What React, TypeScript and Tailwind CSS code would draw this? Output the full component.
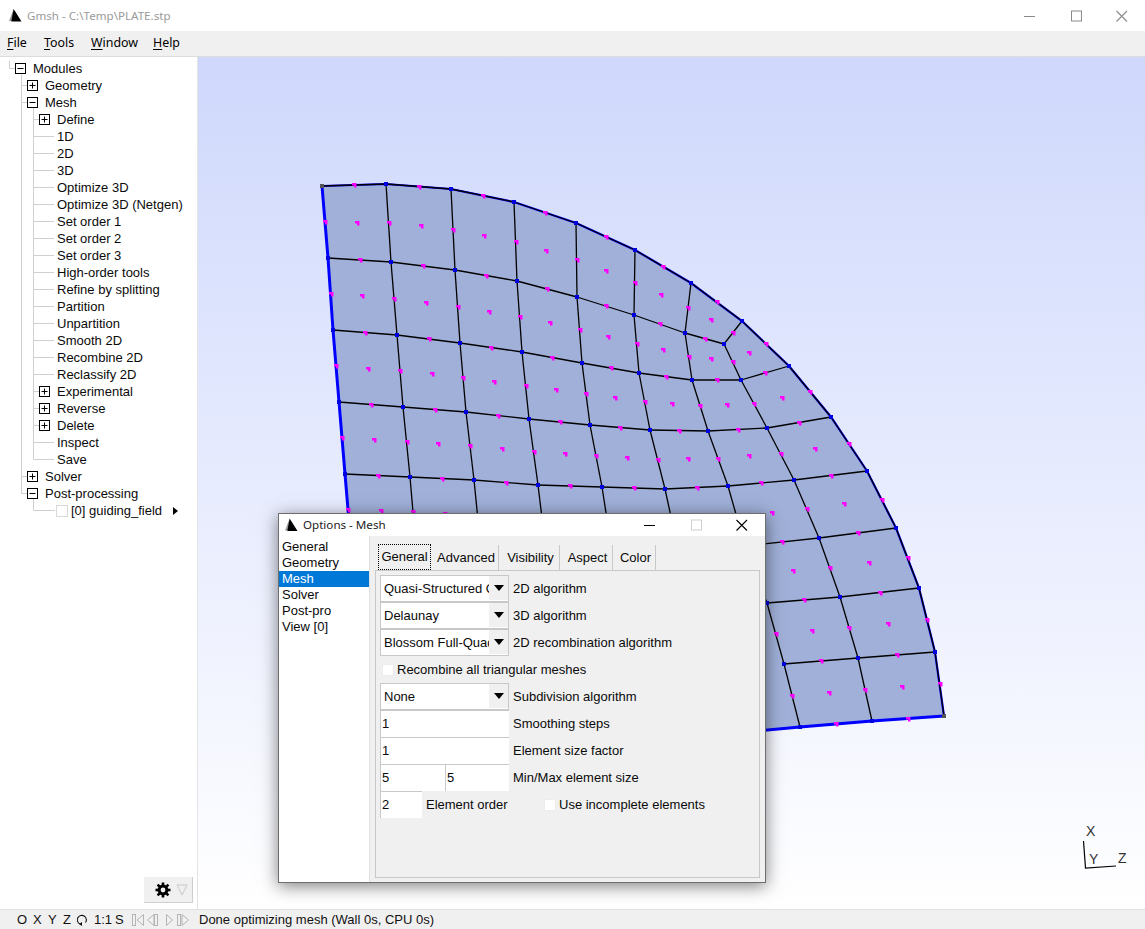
import type { ReactNode } from "react";

type Pt = [number, number];

// mesh nodes, in page coordinates
const grid: Pt[][] = [
  [[322, 186], [386, 184], [451, 189], [514, 202], [576, 223], [635, 250], [691, 283]],
  [[328, 258], [391, 262], [455, 270], [517, 281], [577, 297], [634, 315], [685, 333]],
  [[333, 330], [397, 335], [460, 343], [522, 352], [582, 363], [639, 373], [692, 380]],
  [[339, 402], [403, 407], [466, 412], [529, 419], [590, 425], [650, 430], [708, 431]],
  [[345, 474], [410, 477], [474, 480], [538, 485], [602, 487], [665, 489], [728, 486]],
  [[351, 545], [416, 547], [481, 550], [546, 551], [612, 551], [678, 549], [745, 546]],
];

const extraQuads: Pt[][] = [
  [[691, 283], [742, 321], [724, 344], [685, 333]],
  [[742, 321], [789, 366], [741, 380], [724, 344]],
  [[685, 333], [724, 344], [741, 380], [692, 380]],
  [[692, 380], [741, 380], [767, 428], [708, 431]],
  [[741, 380], [789, 366], [831, 417], [767, 428]],
  [[708, 431], [767, 428], [794, 480], [728, 486]],
  [[767, 428], [831, 417], [867, 471], [794, 480]],
  [[728, 486], [794, 480], [819, 538], [745, 546]],
  [[794, 480], [867, 471], [896, 528], [819, 538]],
  [[745, 546], [819, 538], [840, 597], [767, 603]],
  [[819, 538], [896, 528], [919, 588], [840, 597]],
  [[767, 603], [840, 597], [858, 658], [784, 664]],
  [[840, 597], [919, 588], [935, 652], [858, 658]],
  [[784, 664], [858, 658], [872, 721], [800, 727]],
  [[858, 658], [935, 652], [944, 716], [872, 721]],
];

const quads: Pt[][] = [...extraQuads];
for (let r = 0; r < grid.length - 1; r++) {
  for (let c = 0; c < grid[r].length - 1; c++) {
    quads.push([grid[r][c], grid[r][c + 1], grid[r + 1][c + 1], grid[r + 1][c]]);
  }
}

const edges = new Map<string, [Pt, Pt]>();
const nodes = new Map<string, Pt>();
quads.forEach((q) => {
  q.forEach((p, i) => {
    const n = q[(i + 1) % 4];
    nodes.set(p.join(), p);
    const key = [p.join(), n.join()].sort().join("|");
    edges.set(key, [p, n]);
  });
});

const centers: Pt[] = quads.map((q) => [
  q.reduce((s, p) => s + p[0], 0) / 4,
  q.reduce((s, p) => s + p[1], 0) / 4,
]);
const mids: Pt[] = [...edges.values()].map(([a, b]) => [(a[0] + b[0]) / 2, (a[1] + b[1]) / 2]);

const leftEdge: Pt[] = [[351, 545], [345, 474], [339, 402], [333, 330], [328, 258], [322, 186]];
const arc: Pt[] = [
  [322, 186], [386, 184], [451, 189], [514, 202], [576, 223], [635, 250], [691, 283],
  [742, 321], [789, 366], [831, 417], [867, 471], [896, 528], [919, 588],
  [935, 652], [944, 716],
];
const bottomEdge: Pt[] = [[944, 716], [872, 721], [800, 727], [700, 736]];
const toPoints = (pts: Pt[]) => pts.map((p) => p.join(",")).join(" ");

const MeshView = () => (
  <svg viewBox="198 57 947 852" className="block h-full w-full">
    <polygon points={toPoints([...leftEdge, ...arc, ...bottomEdge, [400, 736]])} fill="#a0b0d8" />
    <polyline points={toPoints(arc)} fill="none" stroke="#0000ff" strokeWidth={2.2} />
    {[...edges.values()].map(([a, b], i) => (
      <line key={i} x1={a[0]} y1={a[1]} x2={b[0]} y2={b[1]} stroke="#000" strokeWidth={1.3} />
    ))}
    <polyline points={toPoints(leftEdge)} fill="none" stroke="#0000ff" strokeWidth={3} />
    <polyline points={toPoints(bottomEdge)} fill="none" stroke="#0000ff" strokeWidth={3} />
    {[...nodes.values()].map((p, i) => (
      <rect key={i} x={Math.round(p[0]) - 2} y={Math.round(p[1]) - 2} width={4} height={4} fill="#0000e0" />
    ))}
    {[...mids, ...centers].map((p, i) => (
      <path key={i} d={`M${Math.round(p[0]) - 2} ${Math.round(p[1]) - 2}h4.5v4.5h-2.5v-2h-2z`} fill="#ff00ff" />
    ))}
    <rect x={320} y={184} width={4} height={4} fill="#555" />
    <rect x={942} y={714} width={4} height={4} fill="#555" />
    {/* axes */}
    <polyline points="1083.5,841 1085.5,868 1116,866" fill="none" stroke="#000" strokeWidth={1.2} />
    <g fontFamily="'Liberation Sans', Arial, sans-serif" fontSize={14} fill="#333">
      <text x={1086} y={836}>X</text>
      <text x={1089} y={864}>Y</text>
      <text x={1118} y={863}>Z</text>
    </g>
  </svg>
);

const Sail = ({ className }: { className: string }) => (
  <svg viewBox="0 0 14 14" className={className}>
    <polygon points="5,0 5,13 0,13" fill="#9a9a9a" />
    <polygon points="5,0 13.5,13.5 2.5,13.5" fill="#000" />
  </svg>
);

const WinButtons = ({ color, maxColor, closeColor }: { color: string; maxColor: string; closeColor: string }) => (
  <div className="flex items-center">
    <svg width="46" height="12" viewBox="0 0 46 12">
      <line x1="17" y1="6.5" x2="28" y2="6.5" stroke={color} />
    </svg>
    <svg width="46" height="12" viewBox="0 0 46 12">
      <rect x="18.5" y="1" width="10" height="10" fill="none" stroke={maxColor} />
    </svg>
    <svg width="46" height="12" viewBox="0 0 46 12">
      <path d="M17.5 1 L28 11.5 M28 1 L17.5 11.5" stroke={closeColor} strokeWidth="1.1" />
    </svg>
  </div>
);

type TreeItem = { label: string; depth: number; box?: "+" | "-" };

const tree: TreeItem[] = [
  { label: "Modules", depth: 0, box: "-" },
  { label: "Geometry", depth: 1, box: "+" },
  { label: "Mesh", depth: 1, box: "-" },
  { label: "Define", depth: 2, box: "+" },
  { label: "1D", depth: 2 },
  { label: "2D", depth: 2 },
  { label: "3D", depth: 2 },
  { label: "Optimize 3D", depth: 2 },
  { label: "Optimize 3D (Netgen)", depth: 2 },
  { label: "Set order 1", depth: 2 },
  { label: "Set order 2", depth: 2 },
  { label: "Set order 3", depth: 2 },
  { label: "High-order tools", depth: 2 },
  { label: "Refine by splitting", depth: 2 },
  { label: "Partition", depth: 2 },
  { label: "Unpartition", depth: 2 },
  { label: "Smooth 2D", depth: 2 },
  { label: "Recombine 2D", depth: 2 },
  { label: "Reclassify 2D", depth: 2 },
  { label: "Experimental", depth: 2, box: "+" },
  { label: "Reverse", depth: 2, box: "+" },
  { label: "Delete", depth: 2, box: "+" },
  { label: "Inspect", depth: 2 },
  { label: "Save", depth: 2 },
  { label: "Solver", depth: 1, box: "+" },
  { label: "Post-processing", depth: 1, box: "-" },
];

const TreeBox = ({ kind }: { kind: "+" | "-" }) => (
  <svg width="11" height="11" viewBox="0 0 11 11" className="shrink-0">
    <rect x="0.5" y="0.5" width="10" height="10" fill="#fff" stroke="#000" />
    <line x1="2.5" y1="5.5" x2="8.5" y2="5.5" stroke="#000" />
    {kind === "+" && <line x1="5.5" y1="2.5" x2="5.5" y2="8.5" stroke="#000" />}
  </svg>
);

const TreeRow = ({ item }: { item: TreeItem }) => {
  const left = 15 + item.depth * 12;
  return (
    <div className="relative flex h-[17px] items-center whitespace-nowrap" style={{ paddingLeft: left }}>
      {item.box ? <TreeBox kind={item.box} /> : <span className="w-[11px]" />}
      <span className="ml-[7px]">{item.label}</span>
    </div>
  );
};

// connector lines of the tree, behind the rows
const TreeLines = () => {
  const rowY = (i: number) => 8.5 + i * 17;
  const segs: number[][] = [[9.5, 0, 9.5, 8.5], [9.5, 8.5, 15, 8.5]];
  const last1 = rowY(25);
  segs.push([21.5, 14, 21.5, last1]);
  const last2 = rowY(23);
  segs.push([33.5, rowY(2) + 5, 33.5, last2]);
  segs.push([33.5, rowY(25) + 5, 33.5, rowY(26)], [33.5, rowY(26), 55, rowY(26)]);
  tree.forEach((t, i) => {
    if (t.depth === 1) segs.push([21.5, rowY(i), 27, rowY(i)]);
    if (t.depth === 2) segs.push([33.5, rowY(i), t.box ? 39 : 54, rowY(i)]);
  });
  return (
    <svg className="absolute top-0 left-0" width="70" height="460">
      {segs.map((s, i) => (
        <line key={i} x1={s[0]} y1={Math.floor(s[1]) + 0.5} x2={s[2]} y2={Math.floor(s[3]) + 0.5} stroke="#cfcfcf" />
      ))}
    </svg>
  );
};

const Choice = ({ value }: { value: string }) => (
  <div className="flex h-[27px] w-[129px] border border-[#c8c8c8] bg-white pb-[1px]">
    <span className="w-[108px] overflow-hidden pl-[3px] leading-[25px] whitespace-nowrap">{value}</span>
    <span className="flex w-[19px] items-center justify-center bg-[#f0f0f0]">
      <svg width="10" height="6" viewBox="0 0 10 6">
        <polygon points="0,0 10,0 5,6" fill="#000" />
      </svg>
    </span>
  </div>
);

const Input = ({ value, width }: { value: string; width: string }) => (
  <div className={`h-[27px] border-t border-l border-[#c8c8c8] bg-white pl-[1px] leading-[25px] ${width}`}>{value}</div>
);

const Row = ({ children, label }: { children: ReactNode; label?: string }) => (
  <div className="flex h-[27px] items-center">
    {children}
    {label && <span className="ml-[4px]">{label}</span>}
  </div>
);

const Check = ({ label, className }: { label: string; className?: string }) => (
  <div className={`flex items-center ${className ?? ""}`}>
    <span className="mr-[3px] h-[12px] w-[12px] border border-[#ececec] bg-white" />
    <span>{label}</span>
  </div>
);

const OptionsDialog = () => (
  <div className="absolute top-[513px] left-[278px] flex h-[370px] w-[488px] flex-col border border-[#6e6e6e] bg-white text-[13px] text-[#0a0a0a] shadow-[0_3px_16px_rgba(0,0,0,0.5)]">
    <div className="flex h-[22px] shrink-0 items-center justify-between">
      <div className="flex items-center pl-[6px]">
        <Sail className="h-[14px] w-[13px]" />
        <span className="ml-[5px] font-['Noto_Sans',sans-serif] text-[11.6px] text-[#222]">Options - Mesh</span>
      </div>
      <WinButtons color="#000" maxColor="#cfcfcf" closeColor="#000" />
    </div>
    <div className="flex min-h-0 flex-1">
      <div className="w-[90px] shrink-0 pt-[3px] font-['Liberation_Sans',Arial,sans-serif]">
        {["General", "Geometry", "Mesh", "Solver", "Post-pro", "View [0]"].map((name) => (
          <div key={name} className={`h-[16px] pl-[3px] leading-[16px] ${name === "Mesh" ? "bg-[#0078d7] text-white" : ""}`}>
            {name}
          </div>
        ))}
      </div>
      <div className="flex min-w-0 flex-1 flex-col border-l border-[#e0e0e0] bg-[#f0f0f0] pr-[5px] pb-[4px] pl-[5px] font-['Liberation_Sans',Arial,sans-serif]">
        <div className="flex h-[34px] shrink-0 items-end pl-[3px]">
          <div className="mr-[3px] flex h-[26px] w-[53px] items-center justify-center border border-dotted border-black pb-[1px]">General</div>
          {[
            ["Advanced", "w-[65px]"],
            ["Visibility", "w-[58px]"],
            ["Aspect", "w-[50px]"],
            ["Color", "w-[40px]"],
          ].map(([name, w]) => (
            <div key={name} className={`mr-[3px] flex h-[25px] items-center justify-center border-r border-[#c8c8c8] pt-[1px] ${w}`}>
              {name}
            </div>
          ))}
        </div>
        <div className="flex-1 border border-[#c8c8c8] px-[4px] pt-[4px]">
          <Row label="2D algorithm"><Choice value="Quasi-Structured Quad" /></Row>
          <Row label="3D algorithm"><Choice value="Delaunay" /></Row>
          <Row label="2D recombination algorithm"><Choice value="Blossom Full-Quad" /></Row>
          <Row><Check label="Recombine all triangular meshes" className="pl-[2px]" /></Row>
          <Row label="Subdivision algorithm"><Choice value="None" /></Row>
          <Row label="Smoothing steps"><Input value="1" width="w-[129px]" /></Row>
          <Row label="Element size factor"><Input value="1" width="w-[129px]" /></Row>
          <Row label="Min/Max element size">
            <Input value="5" width="w-[65px]" />
            <Input value="5" width="w-[64px]" />
          </Row>
          <Row label="Element order">
            <Input value="2" width="w-[42px]" />
          </Row>
        </div>
      </div>
    </div>
    <Check label="Use incomplete elements" className="absolute top-[281px] left-[265px] font-['Liberation_Sans',Arial,sans-serif]" />
  </div>
);

const Gear = () => (
  <svg width="16" height="16" viewBox="0 0 16 16">
    <g stroke="#000" strokeWidth="2.6">
      <line x1="8" y1="0.5" x2="8" y2="15.5" />
      <line x1="0.5" y1="8" x2="15.5" y2="8" />
      <line x1="2.6" y1="2.6" x2="13.4" y2="13.4" />
      <line x1="13.4" y1="2.6" x2="2.6" y2="13.4" />
    </g>
    <circle cx="8" cy="8" r="3.9" fill="#f0f0f0" stroke="#000" strokeWidth="3" />
  </svg>
);

const StatusBar = () => (
  <div className="flex h-[20px] shrink-0 items-center border-t border-[#e0e0e0] bg-[#f0f0f0] pl-[17px] font-['Liberation_Sans',Arial,sans-serif] text-[13px] whitespace-nowrap text-[#111]">
    <span className="w-[16px]">O</span>
    <span className="w-[15px]">X</span>
    <span className="w-[15px]">Y</span>
    <span className="w-[14px]">Z</span>
    <svg width="11" height="12" viewBox="0 0 11 12" className="mr-[6px]">
      <path d="M3 10 A4.5 4.5 0 1 1 8.5 8.5" fill="none" stroke="#111" strokeWidth="1.1" />
      <polygon points="5,8 5,12 2,10" fill="#111" />
    </svg>
    <span className="w-[21px]">1:1</span>
    <span className="w-[17px]">S</span>
    <svg width="60" height="14" viewBox="0 0 60 14" className="mr-[7px]" fill="none" stroke="#b4b4b4">
      <rect x="0.5" y="1.5" width="3" height="11" />
      <path d="M11.5 1.5 L5 7 L11.5 12.5 Z" />
      <path d="M22 1.5 L15.5 7 L22 12.5 Z" />
      <rect x="22.5" y="1.5" width="3" height="11" />
      <path d="M34.5 1.5 L40.5 7 L34.5 12.5 Z" />
      <rect x="45.5" y="1.5" width="3" height="11" />
      <path d="M50 1.5 L56.5 7 L50 12.5 Z" />
    </svg>
    <span>Done optimizing mesh (Wall 0s, CPU 0s)</span>
  </div>
);

const menus = [
  ["File", "w-[37px]"],
  ["Tools", "w-[47px]"],
  ["Window", "w-[62px]"],
  ["Help", "w-[40px]"],
];

export default function App() {
  return (
    <div className="relative flex h-[929px] w-[1145px] flex-col overflow-hidden bg-white font-['Liberation_Sans',Arial,sans-serif] text-[13px] text-[#0a0a0a]">
      {/* Title bar */}
      <div className="flex h-[31px] shrink-0 items-center justify-between bg-white">
        <div className="flex items-center pl-[9px]">
          <Sail className="h-[15px] w-[13px]" />
          <span className="ml-[5px] font-['Noto_Sans',sans-serif] text-[11.6px] text-[#9a9a9a]">Gmsh - C:\Temp\PLATE.stp</span>
        </div>
        <WinButtons color="#8a8a8a" maxColor="#8a8a8a" closeColor="#8a8a8a" />
      </div>

      {/* Menu */}
      <div className="flex h-[26px] shrink-0 items-center border-b border-[#dcdcdc] bg-[#f0f0f0] pl-[7px] font-['Noto_Sans',sans-serif] text-[12.4px] text-black">
        {menus.map(([m, w]) => (
          <span key={m} className={w}>
            <span className="underline underline-offset-2">{m[0]}</span>
            {m.slice(1)}
          </span>
        ))}
      </div>

      {/* Main */}
      <div className="flex min-h-0 flex-1">
        <div className="relative flex w-[198px] shrink-0 flex-col border-r border-[#e4e4e4] bg-white">
          <div className="relative pt-[3px]">
            <div className="relative">
              <TreeLines />
              {tree.map((item) => (
                <TreeRow key={item.label} item={item} />
              ))}
              <div className="relative flex h-[17px] items-center whitespace-nowrap pl-[56px]">
                <span className="h-[12px] w-[12px] border border-[#d8d8d8] bg-white" />
                <span className="ml-[3px]">[0] guiding_field</span>
                <svg width="5" height="8" viewBox="0 0 5 8" className="ml-[11px]">
                  <polygon points="0,0 5,4 0,8" fill="#000" />
                </svg>
              </div>
            </div>
          </div>
          <div className="mt-auto mr-[4px] mb-[6px] flex h-[26px] w-[49px] items-center self-end border-r border-b border-[#cfcfcf] bg-[#f0f0f0] pl-[11px]">
            <Gear />
            <svg width="12" height="12" viewBox="0 0 12 12" className="ml-[5px]">
              <polygon points="1,1 11,1 6,11" fill="none" stroke="#c8c8c8" />
            </svg>
          </div>
        </div>
        <div className="min-w-0 flex-1 bg-linear-to-b from-[#cfd8fc] to-[#ffffff]">
          <MeshView />
        </div>
      </div>

      <StatusBar />
      <OptionsDialog />
    </div>
  );
}
